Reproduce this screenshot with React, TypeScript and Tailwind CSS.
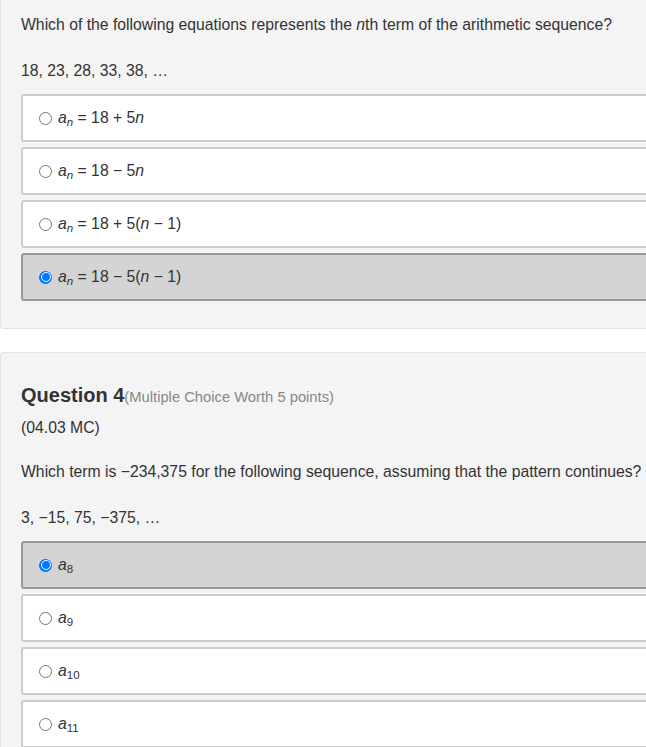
import type { ReactNode } from "react";

interface ChoiceProps {
  selected?: boolean;
  children: ReactNode;
}

function Radio({ selected }: { selected?: boolean }) {
  if (selected) {
    return (
      <span className="flex h-[13px] w-[13px] shrink-0 items-center justify-center rounded-full bg-[#0075ff]">
        <span className="h-[10px] w-[10px] rounded-full border-[1.5px] border-white bg-[#0075ff]" />
      </span>
    );
  }
  return <span className="h-[13px] w-[13px] shrink-0 rounded-full border border-[#767676] bg-white" />;
}

function Choice({ selected, children }: ChoiceProps) {
  return (
    <div
      className={
        selected
          ? "flex h-[48px] items-center gap-[6px] rounded-[3px] border-2 border-[#999] bg-[#d4d4d4] pl-4"
          : "flex h-[48px] items-center gap-[6px] rounded-[3px] border-2 border-[#ccc] bg-white pl-4"
      }
    >
      <Radio selected={selected} />
      <span className="text-[15.75px] leading-6 text-[#333]">{children}</span>
    </div>
  );
}

function A({ sub }: { sub: string }) {
  return (
    <>
      <i>a</i>
      <sub className="text-[11.5px] not-italic">{sub}</sub>
    </>
  );
}

function An() {
  return (
    <>
      <i>a</i>
      <sub className="text-[11.5px]">
        <i>n</i>
      </sub>
    </>
  );
}

export default function App() {
  return (
    <div className="min-h-[747px] w-[646px] overflow-hidden bg-white font-['Liberation_Sans',Arial,sans-serif] text-[#333]">
      <div className="w-[700px] rounded-b-[4px] border-b border-l border-[#e3e3e3] bg-[#f4f4f4] pl-[20px] pt-[13px] pb-[27px]">
        <p className="text-[15.75px] leading-6">
          Which of the following equations represents the <i>n</i>th term of the arithmetic sequence?
        </p>
        <p className="mt-[22px] text-[15.75px] leading-6">18, 23, 28, 33, 38, …</p>
        <div className="mt-[11px] flex flex-col gap-[5px]">
          <Choice>
            <An /> = 18 + 5<i>n</i>
          </Choice>
          <Choice>
            <An /> = 18 − 5<i>n</i>
          </Choice>
          <Choice>
            <An /> = 18 + 5(<i>n</i> − 1)
          </Choice>
          <Choice selected>
            <An /> = 18 − 5(<i>n</i> − 1)
          </Choice>
        </div>
      </div>

      <div className="mt-[23px] w-[700px] rounded-t-[4px] border-l border-t border-[#e3e3e3] bg-[#f4f4f4] pl-[20px] pt-[28px]">
        <div className="flex items-baseline">
          <span className="text-[20px] font-bold leading-7 text-[#333]">Question 4</span>
          <span className="text-[14.75px] text-[#888]">(Multiple Choice Worth 5 points)</span>
        </div>
        <p className="mt-[7px] text-[15.75px] leading-6">(04.03 MC)</p>
        <p className="mt-[20px] text-[15.75px] leading-6">
          Which term is −234,375 for the following sequence, assuming that the pattern continues?
        </p>
        <p className="mt-[22px] text-[15.75px] leading-6">3, −15, 75, −375, …</p>
        <div className="mt-[11px] flex flex-col gap-[5px]">
          <Choice selected>
            <A sub="8" />
          </Choice>
          <Choice>
            <A sub="9" />
          </Choice>
          <Choice>
            <A sub="10" />
          </Choice>
          <Choice>
            <A sub="11" />
          </Choice>
        </div>
      </div>
    </div>
  );
}
